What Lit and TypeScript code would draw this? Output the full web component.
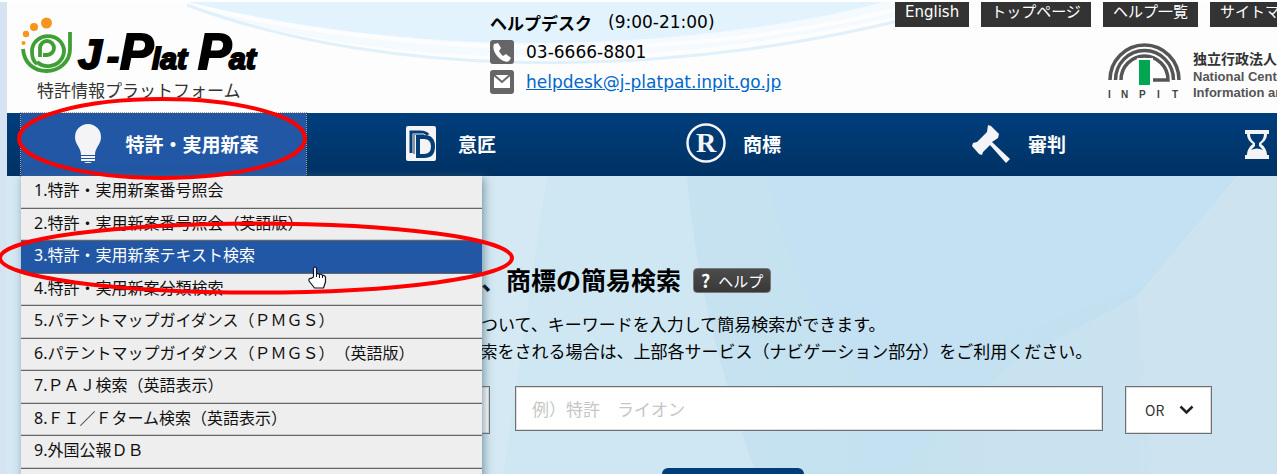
import { LitElement, html, css, svg } from "lit";
import { customElement } from "lit/decorators.js";

const MENU = [
  "1.特許・実用新案番号照会",
  "2.特許・実用新案番号照会（英語版）",
  "3.特許・実用新案テキスト検索",
  "4.特許・実用新案分類検索",
  "5.パテントマップガイダンス（ＰＭＧＳ）",
  "6.パテントマップガイダンス（ＰＭＧＳ）（英語版）",
  "7.ＰＡＪ検索（英語表示）",
  "8.ＦＩ／Ｆターム検索（英語表示）",
  "9.外国公報ＤＢ",
  "10.審査書類情報照会",
];

const ICONS: Record<string, unknown> = {
  bulb: svg`<path fill="#f4f4f6" d="M20 1a13 13 0 0 0-13 13c0 8 6 10 6 18h14c0-8 6-10 6-18A13 13 0 0 0 20 1z"/><path fill="#f4f4f6" d="M13 33h14v2H13zM13 36h14v2H13zM16 39h8l-2 1h-4z"/>`,
  design: svg`<rect x="5" y="3" width="30" height="35" rx="2" fill="#f4f4f6"/><path fill="none" stroke="#033e77" stroke-width="3" d="M10 30V9h9q6 0 8 3"/><path fill="none" stroke="#8293ab" stroke-width="2" d="M13 31V11h10"/><path fill="#f4f4f6" stroke="#033e77" stroke-width="4" d="M17 14h6q9 0 9 9.500t-9 9.500h-6z"/>`,
  mark: svg`<circle cx="20" cy="20" r="18.500" fill="none" stroke="#f4f4f6" stroke-width="2.500"/><text x="20" y="29" text-anchor="middle" fill="#f4f4f6" font-family="Liberation Serif, serif" font-weight="700" font-size="28">R</text>`,
  gavel: svg`<path fill="#f4f4f6" d="M17 2l3 1 8 8-1 4-6 4 18 17-4 4-16-18-7 7-1 3-3-1-7-8 1-3 4-1 10-10z"/>`,
  glass: svg`<path fill="#f4f4f6" fill-rule="evenodd" d="M8 7h24v4h-2c0 5-3 8-6 10 3 2 6 6 6 11h2v4H8v-4h2c0-5 3-9 6-11-3-2-6-5-6-10H8zM13 11c0 4 2 7 5 9v3l-4 4q6-3 12 0l-4-4v-3c3-2 5-5 5-9z"/>`,
};

const NAV = [
  { icon: "bulb", label: "特許・実用新案", open: true },
  { icon: "design", label: "意匠" },
  { icon: "mark", label: "商標" },
  { icon: "gavel", label: "審判" },
  { icon: "glass", label: "経過情報" },
];

@customElement("app-root")
export class AppRoot extends LitElement {
  static styles = css`
    * { box-sizing: border-box; }
    :host {
      display: block; position: relative; height: 100vh; overflow: hidden;
      border-top: 2px solid #fff; padding-left: 7px; background: #d6e3f2; color: #000;
      font-family: "Noto Sans", "Noto Sans CJK JP", sans-serif; font-size: 16px;
      text-spacing-trim: space-all;
    }
    .page { position: relative; height: 100%; background: #c5e1f0; }
    .header { position: relative; display: flex; height: 111px; background: #fdfdfd; overflow: hidden; }
    .swoosh, .backdrop { position: absolute; inset: 0; width: 100%; height: 100%; }
    .brand { position: relative; flex: 0 0 483px; padding: 14px 0 0 13px; }
    .brand svg, .row svg { display: block; }
    .help { position: relative; flex: 0 0 405px; padding-top: 5px; font-family: "DejaVu Sans", "Noto Sans CJK JP", sans-serif; }
    .row { display: flex; align-items: center; gap: 12px; height: 30px; font-size: 17px; }
    .hours { gap: 16px; }
    .row a { color: #06c; }
    .tools { position: relative; flex: 0 0 auto; }
    .links { display: flex; gap: 12px; }
    .links a { padding: 0 10px; height: 25px; line-height: 20px; background: #333; color: #fff; text-decoration: none; font-size: 15px; font-family: "DejaVu Sans", "Noto Sans CJK JP", sans-serif; white-space: nowrap; }
    .inpit { display: flex; gap: 12px; padding: 15px 0 0 213px; }
    .org { padding-top: 8px; font: 700 13px/16px "Liberation Sans", "Noto Sans CJK JP", sans-serif; color: #555; white-space: nowrap; }
    .org p { margin: 0; }
    .org .ja { font-size: 14px; line-height: 19px; color: #333; }
    .nav { position: relative; z-index: 1; display: grid; grid-template-columns: repeat(5, 285px); padding-left: 14px; height: 63px; background: linear-gradient(#003e7c, #003264); }
    .nav button { display: flex; align-items: center; justify-content: center; gap: 17px; border: 0; padding: 0 0 3px; background: none; color: #fff; font: 700 19px "Noto Sans CJK JP", sans-serif; white-space: nowrap; }
    .nav button.open { background: #2257a5; outline: 1px dotted #bba888; }
    .menu { position: absolute; z-index: 2; top: 174px; left: 14px; width: 461px; height: 325px; margin: 0; padding: 0; list-style: none; display: grid; grid-template-rows: repeat(10, 1fr); background: #eee; box-shadow: 2px 2px 9px #4d6f7fb0; }
    .menu li { border-bottom: 1px solid #666; box-shadow: inset 0 -1px #ccc; }
    .menu a { display: block; padding-left: 13px; line-height: 28px; color: #111; text-decoration: none; }
    .menu li.on { background: #2257a5; box-shadow: none; }
    .menu .on a { color: #fff; }
    .search { position: relative; padding: 85px 65px 0 224px; }
    .title { position: relative; display: flex; align-items: center; gap: 12px; height: 38px; }
    h1 { margin: 0; font-size: 25px; line-height: 37px; white-space: nowrap; }
    .title button { display: flex; align-items: center; gap: 8px; height: 25px; padding: 0 7px; border: 1px solid #777; border-radius: 4px; background: linear-gradient(#4c4c4c, #383838); color: #fff; font: 15px "Noto Sans CJK JP", sans-serif; }
    .title b { font-size: 18px; }
    .lead { position: relative; margin: 12px 0 21px; padding-left: 12px; font-size: 17px; line-height: 27px; white-space: nowrap; }
    .form { position: relative; display: flex; align-items: flex-start; }
    select, input { appearance: none; border: 1px solid #707070; border-radius: 0; background: #fff; box-shadow: inset 0 0 0 1px #ddd; color: #333; font: 17px "Noto Sans CJK JP", sans-serif; }
    .kind { width: 259px; height: 48px; padding: 0 16px; }
    input { flex: 1; min-width: 0; height: 45px; margin: 0 22px 0 25px; padding: 0 16px; }
    input::placeholder { color: #c6c6c6; }
    .mode { position: relative; }
    .mode select { display: block; width: 87px; height: 48px; padding: 0 19px; font-size: 14px; }
    .mode svg { position: absolute; right: 18px; top: 19px; pointer-events: none; }
    .go { position: relative; display: block; width: 142px; height: 48px; margin: 34px 0 0 431px; border: 0; border-radius: 6px; background: #003d7a; color: #fff; font: 700 17px "Noto Sans CJK JP", sans-serif; }
    .marks { position: absolute; z-index: 3; left: 0; top: -2px; pointer-events: none; }
  `;

  render() {
    return html`
      <div class="page">
        <header class="header">
          <svg class="swoosh" viewBox="0 0 1270 111" preserveAspectRatio="none">
            <path fill="#f5fafe" d="M180 4C380 70 660 75 950 0H850L180 0z"/>
            <path fill="#e3f3fd" d="M180 0C300 28 420 42 540 41S790 24 876 0z"/>
            <path fill="none" stroke="#fdfdfd" stroke-width="4" d="M180 2C370 50 660 70 920 0"/>
            <path fill="none" stroke="#e0f1fc" stroke-width="3" d="M180 3C380 78 680 82 955 2"/>
          </svg>
          <div class="brand">
            <svg width="245" height="90" viewBox="20 16 245 90">
              <g fill="#f7941e"><circle cx="46.500" cy="23" r="5.500"/><circle cx="34" cy="27" r="4"/><circle cx="26" cy="34" r="3.200"/><circle cx="23.500" cy="43" r="2"/></g>
              <g fill="none" stroke="#3f9f35" stroke-width="3.800"><path d="M23 49c1 14 11 22 23.500 22S70 62 70 49V32"/><path d="M37 62a16 15 0 1 0-5-10c0 6 2 10 5 12"/><path d="M40 57V48a7 7 0 1 1 7 7h-4"/></g>
              <text y="69" fill="#000" stroke="#000" stroke-width="2" font-family="Liberation Sans, sans-serif" font-weight="700" font-style="italic" font-size="30"><tspan x="78" font-size="43">J</tspan><tspan x="107" font-size="36">-</tspan><tspan x="120" font-size="50">P</tspan><tspan x="152">lat</tspan><tspan x="198" font-size="50">P</tspan><tspan x="229">at</tspan></text>
              <text x="37" y="97" font-family="Noto Sans CJK JP, sans-serif" font-size="17" fill="#333">特許情報プラットフォーム</text>
            </svg>
          </div>
          <div class="help">
            <div class="row hours"><b>ヘルプデスク</b><span>(9:00-21:00)</span></div>
            <div class="row"><svg width="24" height="24" viewBox="0 0 24 24"><rect width="24" height="24" rx="3" fill="#666"/><path fill="#fff" d="M4 4l4-1 3 5-2 3c1 2 2 3 4 5l3-2 5 4-2 3c-3 2-8-1-11-4S2 9 4 4z"/></svg>03-6666-8801</div>
            <div class="row"><svg width="24" height="24" viewBox="0 0 24 24"><rect width="24" height="24" rx="3" fill="#666"/><path fill="#fff" d="M4 5h16v13H4z"/><path fill="none" stroke="#666" stroke-width="2" d="M4 5l8 7 8-7"/></svg><a href="mailto:helpdesk@j-platpat.inpit.go.jp">helpdesk@j-platpat.inpit.go.jp</a></div>
          </div>
          <div class="tools">
            <nav class="links"><a href="#">English</a><a href="#">トップページ</a><a href="#">ヘルプ一覧</a><a href="#">サイトマップ</a></nav>
            <div class="inpit">
              <svg width="73" height="58" viewBox="0 0 73 58">
                <g fill="none" stroke="#555" stroke-width="3.500"><path d="M2 38a34.500 35 0 0 1 69 0"/><path d="M7.500 38a29 29.500 0 0 1 58 0"/><path d="M13 38a23.500 24 0 0 1 47 0H44"/></g>
                <path fill="#fff" d="M29 16h16v28H29z"/><path fill="#00a650" d="M31 18h11v25H31z"/>
                <text y="56" x="0 13 31 49 64" font-family="Liberation Sans, sans-serif" font-weight="700" font-size="10" fill="#444">INPIT</text>
              </svg>
              <div class="org"><p class="ja">独立行政法人 工業所有権情報・研修館</p><p>National Center for Industrial Property</p><p>Information and Training</p></div>
            </div>
          </div>
        </header>
        <nav class="nav">
          ${NAV.map((n) => html`<button class=${n.open ? "open" : ""}><svg width="40" height="40" viewBox="0 0 40 40">${ICONS[n.icon]}</svg>${n.label}</button>`)}
        </nav>
        <ul class="menu">${MENU.map((m, i) => html`<li class=${i === 2 ? "on" : ""}><a href="#">${m}</a></li>`)}</ul>
        <main class="search">
          <svg class="backdrop" viewBox="0 0 1270 340" preserveAspectRatio="none">
            <defs>
              <linearGradient id="cool"><stop offset="0" stop-color="#cde6f2"/><stop offset="1" stop-color="#c0dff0"/></linearGradient>
              <linearGradient id="pale"><stop offset="0" stop-color="#c5e1ee"/><stop offset="1" stop-color="#cde3f0"/></linearGradient>
            </defs>
            <path fill="url(#cool)" d="M0 0h1270v340H0z"/>
            <path fill="#cfe7f2" d="M0 0h680c10 120 40 220 84 340H0z"/>
            <path fill="#d4e9f3" d="M0 0h540L490 340H0z"/>
            <path fill="#c3e1f2" d="M760 0h510v60l-190 70-220 80q-70-80-100-210z"/>
            <path fill="url(#pale)" d="M1270 30L1130 120 1000 190 850 340h420z"/>
            <path fill="#cde4f0" d="M1270 0h-40l-100 120 20 220h120z"/>
          </svg>
          <div class="title"><h1>特許・実用新案、意匠、商標の簡易検索</h1><button><b>?</b>ヘルプ</button></div>
          <p class="lead">特許・実用新案、意匠、商標について、キーワードを入力して簡易検索ができます。<br>さらに詳細な条件を指定して検索をされる場合は、上部各サービス（ナビゲーション部分）をご利用ください。</p>
          <div class="form">
            <select class="kind" aria-label="検索対象"><option>特許・実用新案</option></select>
            <input aria-label="キーワード" placeholder="例）特許　ライオン">
            <div class="mode"><select aria-label="条件"><option>OR</option></select><svg width="15" height="10" viewBox="0 0 15 10"><path fill="none" stroke="#222" stroke-width="2.500" d="M1.500 1.500l6 6 6-6"/></svg></div>
          </div>
          <button class="go">検索</button>
        </main>
      </div>
      <svg class="marks" width="520" height="300" viewBox="0 0 520 300">
        <g fill="none" stroke="#f00" stroke-width="4"><ellipse cx="162" cy="138.500" rx="143" ry="39.500"/><ellipse cx="256" cy="258" rx="256" ry="34.500"/></g>
        <path fill="#fff" stroke="#112" stroke-width="1.200" stroke-linejoin="round" d="M313.500 277v-9q1.500-2 3 0v6q2-1 3 .500 2-1 3 1 2-.500 3 1.500v5l-2 6h-9l-5.500-7q-.500-3 2-2.500z"/>
        <path stroke="#112" d="M316.500 273v4M319.500 274v4M322.500 275v3"/>
      </svg>`;
  }
}
